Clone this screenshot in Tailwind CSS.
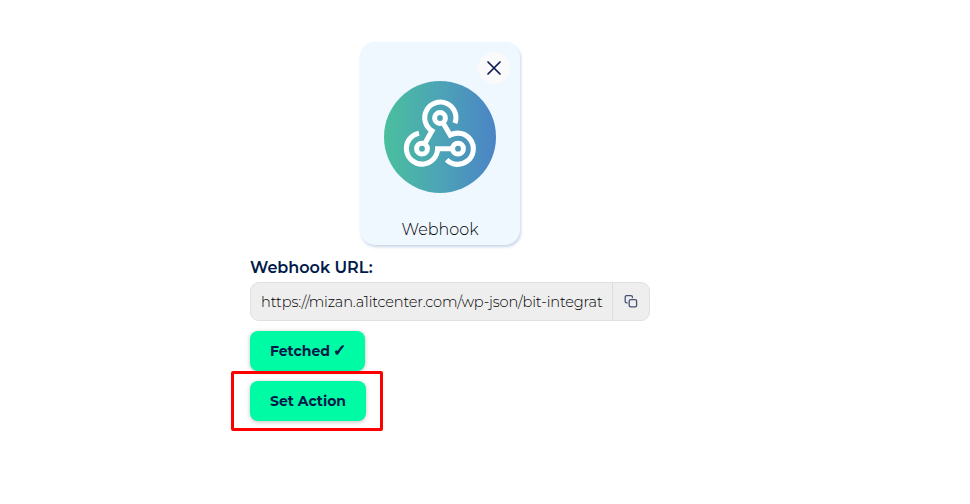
<!DOCTYPE html>
<html lang="en">
<head>
<meta charset="utf-8">
<title>Webhook</title>
<script src="https://cdn.jsdelivr.net/npm/@tailwindcss/browser@4"></script>
</head>
<body class="bg-white font-[Montserrat,Inter,sans-serif] text-[#00184a]">
<main class="ml-[250px] w-[400px] pt-[42px]">
  <section class="relative ml-[110px] flex h-[203px] w-[160px] flex-col items-center rounded-[15px] bg-[#eff7ff] pt-[39px] shadow-[1px_2px_3px_#c9d5e8]">
    <button aria-label="Remove" class="absolute top-[10px] right-[10px] flex size-8 items-center justify-center rounded-full bg-[#fafafa]">
      <svg class="size-4" viewBox="0 0 16 16" fill="none" stroke="#0b1c50" stroke-width="1.7" stroke-linecap="round"><path d="M2 2 14 14M14 2 2 14"/></svg>
    </button>
    <svg class="size-28 shrink-0" viewBox="0 0 112 112" fill="none" stroke="#fff">
      <defs><linearGradient id="g"><stop stop-color="#4abf9d"/><stop offset=".5" stop-color="#4ca4b6"/><stop offset="1" stop-color="#4b84c6"/></linearGradient></defs>
      <circle cx="56" cy="56" r="56" fill="url(#g)" stroke="none"/>
      <g stroke-width="5">
        <circle cx="56" cy="37" r="5.4"/><circle cx="38" cy="67.7" r="5.4"/><circle cx="74" cy="67.7" r="5.4"/>
        <path stroke-width="5.1" d="M70.9 42.2A15.6 15.6 0 1 0 48 49.8L40.5 63M58.8 41.5 66.2 54.1A15.6 15.6 0 1 1 62.6 78.7M35 52.2A15.6 15.6 0 1 0 53.6 67.7H69"/>
      </g>
    </svg>
    <span class="mt-[25px] text-base leading-6 font-light text-black">Webhook</span>
  </section>
  <div class="mt-[11px] h-6 text-base leading-6 font-semibold tracking-[-0.01px] whitespace-nowrap">Webhook URL:</div>
  <div class="mt-[2px] flex h-[39px] w-[400px] overflow-hidden rounded-[9px] border border-[#e0e0e2] bg-[#eee]">
    <div class="flex w-[362px] items-center border-r border-[#dddde0] pt-px pl-[10px] text-[14.6px] leading-5 font-light whitespace-nowrap text-black"><span class="tracking-[-0.17px]">https://mizan.a1itcenter.com/wp-json/bit-integrat</span></div>
    <button aria-label="Copy" class="flex flex-1 items-center justify-center">
      <svg class="size-[14px]" viewBox="0 0 14 14" fill="none" stroke="#455174" stroke-width="1.3" stroke-linecap="round"><path d="M3.2 7.9H2.6Q1.2 7.9 1.2 6.5V2.1Q1.2 .7 2.6 .7H7Q8.4 .7 8.4 2.1V2.5"/><rect x="5.2" y="4.6" width="7.4" height="7.2" rx="1.4"/></svg>
    </button>
  </div>
  <button class="mt-[10px] flex h-10 w-[115px] items-center rounded-lg bg-[#00fba5] pl-5 text-sm font-bold whitespace-nowrap shadow-[0_1px_4px_#00000040]"><span>Fetched</span><span class="ml-[3px] font-['DejaVu_Sans'] text-base leading-5 [-webkit-text-stroke:0.8px_#00184a]">✓</span></button>
  <div class="relative -ml-[19px] h-[60px] w-[152px] rounded-[2px] border-[3px] border-[#ff0000] pt-[7px] pl-4">
    <button class="flex h-10 w-[116px] items-center rounded-lg bg-[#00fba5] pl-5 text-sm font-bold whitespace-nowrap shadow-[0_1px_4px_#00000040]">Set Action</button>
  </div>
</main>
</body>
</html>
